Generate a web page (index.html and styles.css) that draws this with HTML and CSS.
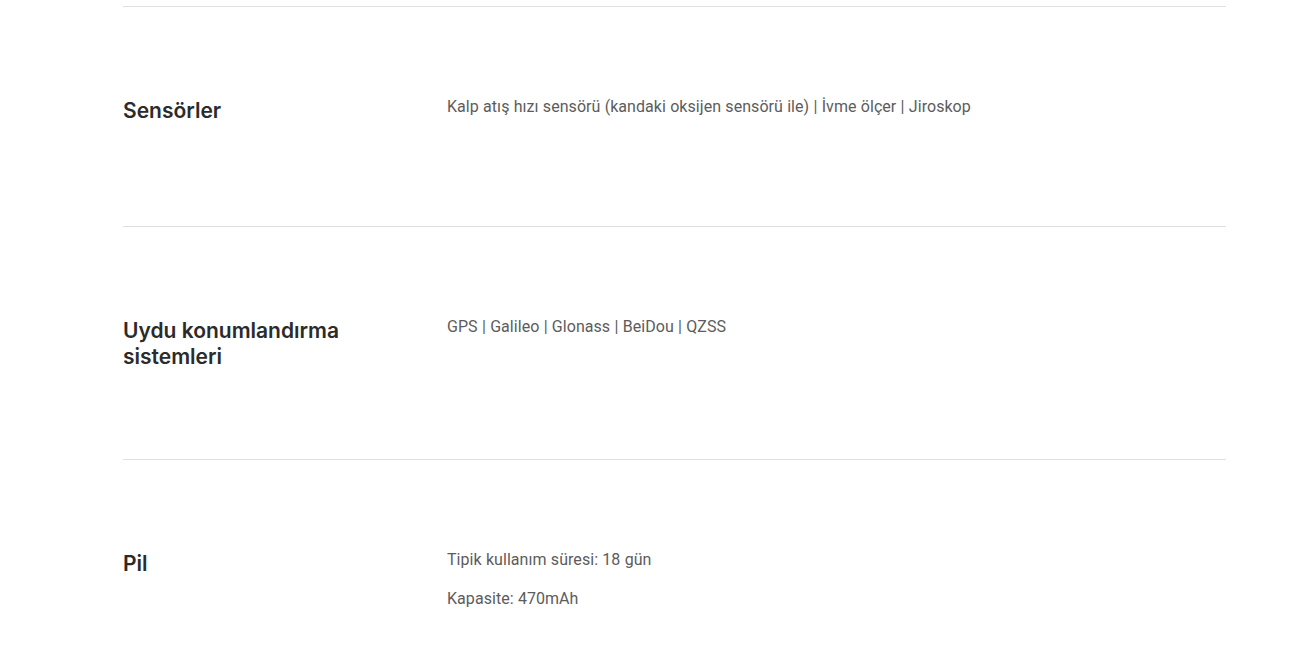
FILE: index.html
```html
<!DOCTYPE html>
<html lang="tr">
<head>
<meta charset="utf-8">
<title>Özellikler</title>
<link rel="stylesheet" href="styles.css">
</head>
<body>
<div class="specs">
  <div class="row">
    <div class="label">Sensörler</div>
    <div class="values"><p>Kalp atış hızı sensörü (kandaki oksijen sensörü ile) | İvme ölçer | Jiroskop</p></div>
  </div>
  <div class="row">
    <div class="label">Uydu konumlandırma sistemleri</div>
    <div class="values"><p>GPS | Galileo | Glonass | BeiDou | QZSS</p></div>
  </div>
  <div class="row">
    <div class="label">Pil</div>
    <div class="values"><p>Tipik kullanım süresi: 18 gün</p><p>Kapasite: 470mAh</p></div>
  </div>
</div>
</body>
</html>
```
FILE: styles.css
```css
html, body { margin: 0; padding: 0; background: #fff; }
body { padding-top: 6px; font-family: Roboto, "Noto Sans", sans-serif; }
.specs { margin-left: 123px; width: 1103px; }
.row {
  display: flex;
  border-top: 1px solid #e0e0e0;
  padding: 91px 0 89px;
}
.label {
  width: 250px;
  margin-right: 74px;
  font-family: Inter, Roboto, sans-serif;
  font-size: 21px;
  line-height: 26px;
  font-weight: 600;
  color: #2b2b2b;
}
.values {
  display: flex;
  flex-direction: column;
  gap: 15px;
  margin-top: -3px;
  padding-bottom: 18px;
}
.values p {
  margin: 0;
  font-size: 16px;
  line-height: 24px;
  letter-spacing: 0.05px;
  word-spacing: 0.25px;
  color: #5c5c5c;
}
```
